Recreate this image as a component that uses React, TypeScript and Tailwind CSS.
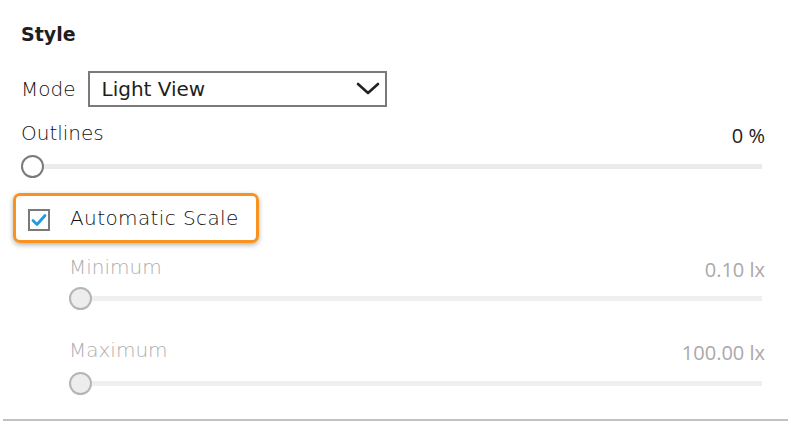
import React from "react";

const labelFont = { fontFamily: "'DejaVu Sans', 'Noto Sans', sans-serif" };
const numFont = { fontFamily: "'Open Sans', 'Noto Sans', sans-serif" };

function Slider({ disabled }: { disabled?: boolean }) {
  return (
    <div className="relative h-[23px] flex items-center">
      <div className={`h-[5px] flex-1 ml-[11px] mr-[3px] ${disabled ? "bg-[#efefef]" : "bg-[#ebebeb]"}`} />
      <div
        className={`absolute left-0 top-0 w-[23px] h-[23px] rounded-full border-2 ${
          disabled ? "border-[#b5b5b5] bg-[#ededed]" : "border-[#7a7a7a] bg-white"
        }`}
      />
    </div>
  );
}

function ValueRow({ label, value, disabled }: { label: string; value: string; disabled?: boolean }) {
  return (
    <div className="flex justify-between items-end h-[28px]">
      <span className="text-[20px] font-extralight leading-[28px]">{label}</span>
      <span
        className={`text-[20px] leading-[22px] ${disabled ? "text-[#a9a9a9]" : "text-[#222]"}`}
        style={numFont}
      >
        {value}
      </span>
    </div>
  );
}

export default function App() {
  return (
    <div className="w-[791px] h-[433px] bg-white text-[#111] overflow-hidden" style={labelFont}>
      <div className="pl-[21px] pr-[26px] pt-[20px]">
        <div className="text-[19px] leading-[28px] font-bold text-[#1e1e1e]">Style</div>

        <div className="mt-[23px] flex items-center gap-[12px] h-[36px]">
          <span className="text-[20px] font-extralight">Mode</span>
          <div className="flex items-center justify-between w-[299px] h-[36px] border-2 border-[#7a7a7a] pl-[12px] pr-[4px]">
            <span className="text-[20px] text-[#1e1e1e]">Light View</span>
            <svg width="24" height="14" viewBox="0 0 24 14" className="mr-[1px]">
              <path d="M2 2 L12 11 L22 2" fill="none" stroke="#222" strokeWidth="2.6" strokeLinecap="round" strokeLinejoin="round" />
            </svg>
          </div>
        </div>

        <div className="mt-[12px]">
          <ValueRow label="Outlines" value="0 %" />
        </div>
        <div className="mt-[8px]">
          <Slider />
        </div>

        <div className="mt-[15px] -ml-[8px] w-[246px] h-[50px] rounded-[7px] border-[3px] border-[#f7931e] shadow-[0_2px_5px_rgba(0,0,0,0.3)] flex items-center pl-[12px]">
          <div className="w-[22px] h-[22px] mt-[3px] border-2 border-[#7a7a7a] flex items-center justify-center">
            <svg width="16" height="14" viewBox="0 0 16 14">
              <path d="M2 7.5 L6 11.5 L14 2.5" fill="none" stroke="#1e9be2" strokeWidth="2.8" strokeLinecap="round" strokeLinejoin="round" />
            </svg>
          </div>
          <span className="ml-[20px] text-[20px] font-extralight tracking-[0.4px]">Automatic Scale</span>
        </div>

        <div className="pl-[48px] text-[#adadad]">
          <div className="mt-[10px]">
            <ValueRow label="Minimum" value="0.10 lx" disabled />
          </div>
          <div className="mt-[6px]">
            <Slider disabled />
          </div>

          <div className="mt-[26px]">
            <ValueRow label="Maximum" value="100.00 lx" disabled />
          </div>
          <div className="mt-[8px]">
            <Slider disabled />
          </div>
        </div>
      </div>
      <div className="mt-[24px] mx-[3px] h-[2px] bg-[#c2c2c2]" />
    </div>
  );
}
